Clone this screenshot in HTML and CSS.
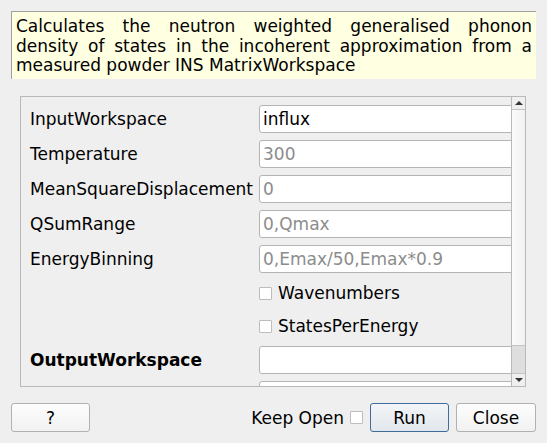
FILE: index.html
```html
<!DOCTYPE html>
<html>
<head>
<meta charset="utf-8">
<link rel="stylesheet" href="styles.css">
</head>
<body>
<div class="dialog">
  <div class="desc">Calculates the neutron weighted generalised phonon density of states in the incoherent approximation from a measured powder INS MatrixWorkspace</div>
  <div class="props">
    <div class="viewport">
      <div class="grid">
        <div class="label">InputWorkspace</div>
        <div class="field"><input class="edit" type="text" value="influx"></div>
        <div class="label">Temperature</div>
        <div class="field"><input class="edit" type="text" placeholder="300"></div>
        <div class="label">MeanSquareDisplacement</div>
        <div class="field"><input class="edit" type="text" placeholder="0"></div>
        <div class="label">QSumRange</div>
        <div class="field"><input class="edit" type="text" placeholder="0,Qmax"></div>
        <div class="label">EnergyBinning</div>
        <div class="field"><input class="edit" type="text" placeholder="0,Emax/50,Emax*0.9"></div>
        <div class="label"></div>
        <div class="field check-row"><span class="box"></span><span>Wavenumbers</span></div>
        <div class="label"></div>
        <div class="field check-row"><span class="box"></span><span>StatesPerEnergy</span></div>
        <div class="label bold">OutputWorkspace</div>
        <div class="field"><input class="edit" type="text"></div>
        <div class="label"></div>
        <div class="field"><input class="edit" type="text"></div>
      </div>
    </div>
    <div class="scrollbar">
      <div class="sb-btn"><span class="arrow up"></span></div>
      <div class="sb-handle"></div>
      <div class="sb-track"></div>
      <div class="sb-btn down"><span class="arrow dn"></span></div>
    </div>
  </div>
  <div class="buttons">
    <button class="btn help">?</button>
    <div class="spacer"></div>
    <span class="keep">Keep Open</span>
    <span class="box keep-box"></span>
    <button class="btn run">Run</button>
    <button class="btn close">Close</button>
  </div>
</div>
</body>
</html>
```
FILE: styles.css
```css
html, body {
  margin: 0;
  padding: 0;
  background: #efefef;
}
body {
  font-family: "DejaVu Sans", sans-serif;
  font-size: 17px;
  color: #000;
  width: 547px;
  height: 443px;
  overflow: hidden;
}
.dialog {
  padding: 11px;
  display: flex;
  flex-direction: column;
}
.desc {
  height: 68px;
  box-sizing: border-box;
  background: #ffffe1;
  border-top: 1px solid #a0a0a0;
  border-left: 1px solid #a0a0a0;
  padding: 5px 4px 0 4px;
  text-align: justify;
  line-height: 19.5px;
}
.props {
  margin: 17px 10px 0 9px;
  height: 291px;
  box-sizing: border-box;
  border: 1px solid #b9b9b9;
  display: flex;
}
.viewport {
  flex: 1;
  overflow: hidden;
}
.grid {
  display: grid;
  grid-template-columns: 229px 280px;
  grid-template-rows: 28px 28px 28px 28px 28px 26px 26px 28px 28px;
  row-gap: 7px;
  padding: 8px 0 0 9px;
}
.label {
  display: flex;
  align-items: center;
  white-space: nowrap;
}
.bold { font-weight: bold; }
.field {
  display: flex;
  align-items: center;
}
.edit {
  width: 100%;
  height: 28px;
  box-sizing: border-box;
  margin: 0;
  border: 1px solid #b4b4b4;
  border-radius: 3px;
  background: #fff;
  padding: 0 3px;
  font-family: "DejaVu Sans", sans-serif;
  font-size: 17px;
  color: #000;
  outline: none;
}
.edit::placeholder { color: #8c8c8c; }
.box {
  display: inline-block;
  width: 13px;
  height: 13px;
  box-sizing: border-box;
  border: 1px solid #bdbdbd;
  background: #fff;
  border-radius: 1px;
}
.check-row .box { margin-right: 6px; }
.scrollbar {
  width: 13px;
  border-left: 1px solid #b9b9b9;
  display: flex;
  flex-direction: column;
}
.sb-btn {
  height: 12px;
  display: flex;
  align-items: center;
  justify-content: center;
  background: #efefef;
  border-bottom: 1px solid #c4c4c4;
}
.sb-btn.down {
  border-bottom: none;
  border-top: 1px solid #c4c4c4;
}
.arrow {
  width: 0;
  height: 0;
  border-left: 4px solid transparent;
  border-right: 4px solid transparent;
}
.arrow.up { border-bottom: 4px solid #333; }
.arrow.dn { border-top: 4px solid #333; }
.sb-handle {
  height: 235px;
  background: linear-gradient(to right, #fbfbfb, #f1f1f1);
  border-bottom: 1px solid #c4c4c4;
}
.sb-track {
  flex: 1;
  background: #dedede;
}
.buttons {
  margin-top: 16px;
  height: 29px;
  display: flex;
  align-items: center;
}
.spacer { flex: 1; }
.btn {
  height: 29px;
  box-sizing: border-box;
  margin: 0;
  padding: 0;
  border: 1px solid #b1b1b1;
  border-radius: 3px;
  background: linear-gradient(#fdfdfd, #f1f1f1);
  font-family: "DejaVu Sans", sans-serif;
  font-size: 17px;
  color: #000;
}
.help { width: 79px; }
.keep { margin-right: 6px; }
.keep-box { margin-right: 7px; }
.run {
  width: 79px;
  border-color: #3e6d9c;
  background: linear-gradient(#f3f5f7, #e2e7ec);
}
.close {
  width: 80px;
  margin-left: 7px;
}
```
